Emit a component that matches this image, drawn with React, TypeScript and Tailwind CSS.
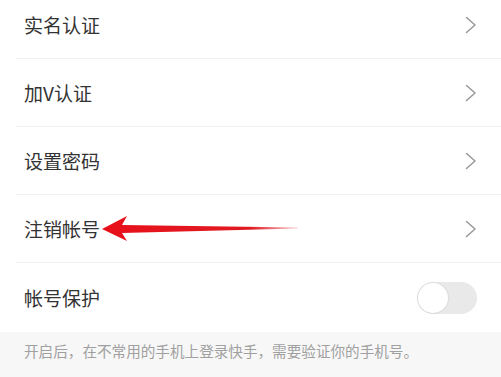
const font = { fontFamily: '"Noto Sans CJK SC", "Noto Sans", sans-serif' };

function Chevron() {
  return (
    <svg width="12" height="18" viewBox="0 0 12 18" fill="none">
      <path d="M1.5 1.5 L10 9 L1.5 16.5" stroke="#9a9a9a" strokeWidth="1.6" strokeLinecap="round" strokeLinejoin="round" />
    </svg>
  );
}

function Row({ label, children }: { label: string; children?: React.ReactNode }) {
  return (
    <div className="pl-4 bg-white">
      <div className="flex items-center justify-between h-[68px] pl-2 pr-[24px] border-b border-[#f2f2f2]">
        <span className="text-[19px] text-[#333] leading-none">{label}</span>
        {children ?? <Chevron />}
      </div>
    </div>
  );
}

function Arrow() {
  return (
    <svg className="absolute left-0 top-0 pointer-events-none" width="501" height="68" viewBox="0 0 501 68">
      <defs>
        <linearGradient id="tail" x1="100" y1="0" x2="300" y2="0" gradientUnits="userSpaceOnUse">
          <stop offset="0" stopColor="#e8101a" />
          <stop offset="0.75" stopColor="#e01a22" />
          <stop offset="1" stopColor="#e01a22" stopOpacity="0.15" />
        </linearGradient>
      </defs>
      <polygon
        points="102,34 127,21 122,30 298,32.6 298,33.4 122,38 127,46"
        fill="url(#tail)"
      />
    </svg>
  );
}

export default function App() {
  return (
    <div className="w-[501px] h-[377px] overflow-hidden bg-[#f7f7f7]" style={font}>
      <div className="mt-[-9px]">
        <Row label="实名认证" />
        <Row label="加V认证" />
        <Row label="设置密码" />
        <div className="relative">
          <Row label="注销帐号" />
          <Arrow />
        </div>
        <div className="bg-white">
          <div className="flex items-center justify-between h-[69px] pl-6 pr-6">
            <span className="text-[19px] text-[#333] leading-none">帐号保护</span>
            <div className="w-[60px] h-[32px] rounded-full bg-[#e9e9e9] p-[1px]">
              <div className="w-[30px] h-[30px] rounded-full bg-white shadow-[0_0_1px_1px_rgba(0,0,0,0.06)]" />
            </div>
          </div>
        </div>
        <div className="pl-6 pt-[12px] text-[14.6px] text-[#a0a0a0] leading-none">
          开启后，在不常用的手机上登录快手，需要验证你的手机号。
        </div>
      </div>
    </div>
  );
}
